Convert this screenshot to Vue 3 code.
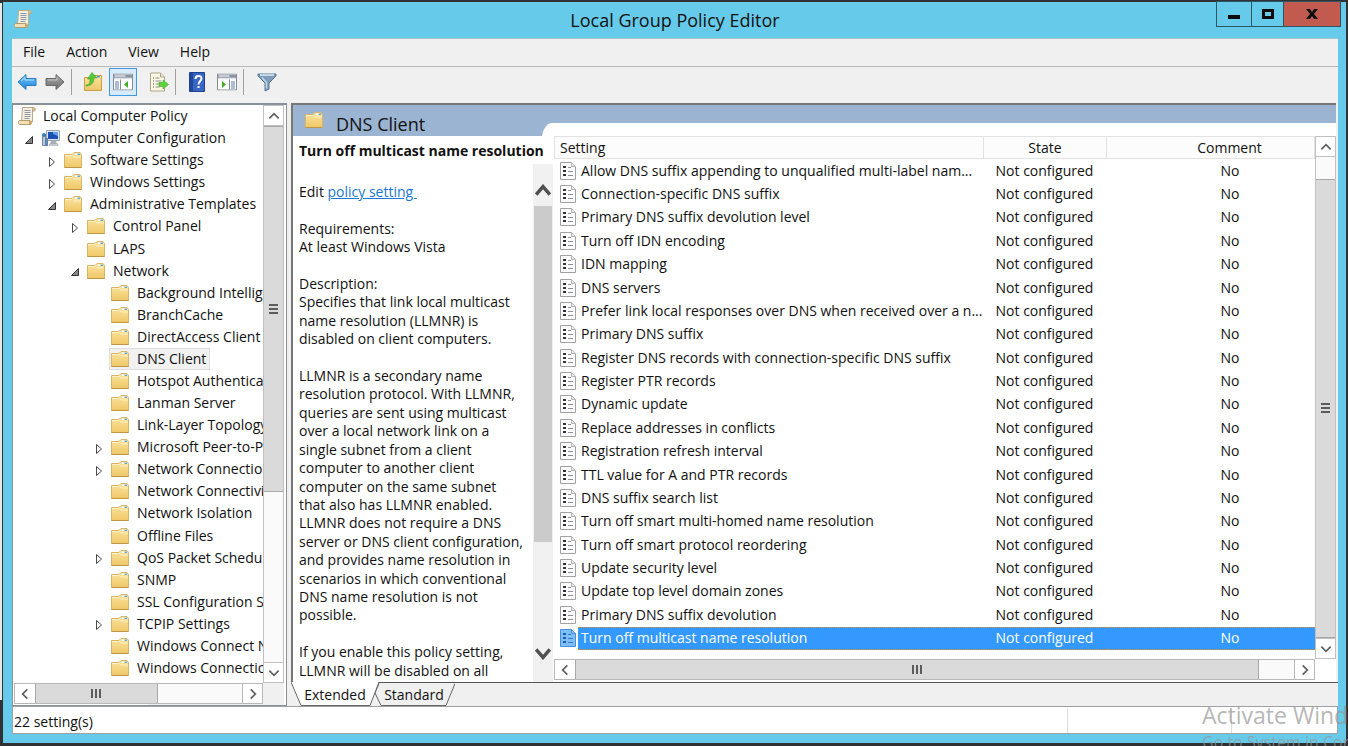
<script setup>
const menus = ['File', 'Action', 'View', 'Help']

const tree = [
  { text: 'Local Computer Policy', level: 0, icon: 'scroll' },
  { text: 'Computer Configuration', level: 1, icon: 'computer', state: 'open' },
  { text: 'Software Settings', level: 2, state: 'closed' },
  { text: 'Windows Settings', level: 2, state: 'closed' },
  { text: 'Administrative Templates', level: 2, state: 'open' },
  { text: 'Control Panel', level: 3, state: 'closed' },
  { text: 'LAPS', level: 3 },
  { text: 'Network', level: 3, state: 'open' },
  { text: 'Background Intelligent Transfer', level: 4 },
  { text: 'BranchCache', level: 4 },
  { text: 'DirectAccess Client', level: 4 },
  { text: 'DNS Client', level: 4, selected: true },
  { text: 'Hotspot Authentication', level: 4 },
  { text: 'Lanman Server', level: 4 },
  { text: 'Link-Layer Topology', level: 4 },
  { text: 'Microsoft Peer-to-Peer', level: 4, state: 'closed' },
  { text: 'Network Connections', level: 4, state: 'closed' },
  { text: 'Network Connectivity', level: 4 },
  { text: 'Network Isolation', level: 4 },
  { text: 'Offline Files', level: 4 },
  { text: 'QoS Packet Scheduler', level: 4, state: 'closed' },
  { text: 'SNMP', level: 4 },
  { text: 'SSL Configuration Settings', level: 4 },
  { text: 'TCPIP Settings', level: 4, state: 'closed' },
  { text: 'Windows Connect Now', level: 4 },
  { text: 'Windows Connection Manager', level: 4 },
]

const description = [
  '',
  'Requirements:',
  'At least Windows Vista',
  '',
  'Description:',
  'Specifies that link local multicast',
  'name resolution (LLMNR) is',
  'disabled on client computers.',
  '',
  'LLMNR is a secondary name',
  'resolution protocol. With LLMNR,',
  'queries are sent using multicast',
  'over a local network link on a',
  'single subnet from a client',
  'computer to another client',
  'computer on the same subnet',
  'that also has LLMNR enabled.',
  'LLMNR does not require a DNS',
  'server or DNS client configuration,',
  'and provides name resolution in',
  'scenarios in which conventional',
  'DNS name resolution is not',
  'possible.',
  '',
  'If you enable this policy setting,',
  'LLMNR will be disabled on all',
]

const settings = [
  'Allow DNS suffix appending to unqualified multi-label nam...',
  'Connection-specific DNS suffix',
  'Primary DNS suffix devolution level',
  'Turn off IDN encoding',
  'IDN mapping',
  'DNS servers',
  'Prefer link local responses over DNS when received over a n...',
  'Primary DNS suffix',
  'Register DNS records with connection-specific DNS suffix',
  'Register PTR records',
  'Dynamic update',
  'Replace addresses in conflicts',
  'Registration refresh interval',
  'TTL value for A and PTR records',
  'DNS suffix search list',
  'Turn off smart multi-homed name resolution',
  'Turn off smart protocol reordering',
  'Update security level',
  'Update top level domain zones',
  'Primary DNS suffix devolution',
  'Turn off multicast name resolution',
]
</script>

<template>
  <div class="desktop">
    <svg class="defs" width="0" height="0" aria-hidden="true">
      <defs>
        <linearGradient id="gFolder" x1="0" y1="0" x2="0" y2="1">
          <stop offset="0" stop-color="#fbe4a0" />
          <stop offset="1" stop-color="#efc767" />
        </linearGradient>
        <linearGradient id="gBlue" x1="0" y1="0" x2="0" y2="1">
          <stop offset="0" stop-color="#7cc8fa" />
          <stop offset="1" stop-color="#1683dc" />
        </linearGradient>
        <linearGradient id="gGrey" x1="0" y1="0" x2="0" y2="1">
          <stop offset="0" stop-color="#aaaaaa" />
          <stop offset="1" stop-color="#6c6c6c" />
        </linearGradient>
        <symbol id="folder" viewBox="0 0 18 16">
          <path d="M.5 2.500h7.500l2-2h6l1.500 2v13H.5z" fill="url(#gFolder)" stroke="#d8b566" />
          <path d="M1 3.500h7.500l1.500 1.500h7" fill="none" stroke="#fff1c4" />
          <path d="M11 1.500h5v1.500h-5z" fill="#fff" />
          <path d="M13.500 1.500h2.500v1.500h-2.500z" fill="#5aa9dc" />
          <path d="M.5 15.500h17" stroke="#bd9747" />
        </symbol>
        <symbol id="scroll" viewBox="0 0 18 18">
          <path d="M4.500.5h11c2 0 2.500 3 .5 3.500h-1.500V15H3.500z" fill="#f5efdf" stroke="#b8ab8c" />
          <path d="M14.500 4V1.500c2-1.500 3.500 2 1.500 2.500z" fill="#dcc793" stroke="#b09a6c" stroke-width=".7" />
          <path d="M1.500 13.500h10.500c-1 1.500-.5 3.500 1 4H2c-2 0-2.500-3.500-.5-4z" fill="#f3dfb4" stroke="#b39c6c" />
          <path d="M12 13.500c2.500 0 2.500 3.500 1 4s-2-2.500-1-4z" fill="#cba864" />
          <path d="M6.500 3.500h6M6.500 5.500h6M6.500 7.500h6M6.500 9.500h6M6.500 11.500h5" stroke="#8f96a5" />
        </symbol>
        <symbol id="computer" viewBox="0 0 20 18">
          <path d="M5.500 1.500h13v10h-13z" fill="#dfe5ee" stroke="#9aa3b2" />
          <path d="M7 3h10v7H7z" fill="#1b50b4" />
          <path d="M12 3h5v4l-5-2z" fill="#61a0ee" />
          <path d="M10 12h5l1 3H9z" fill="#a8afba" />
          <path d="M8 15h9v1.500H8z" fill="#d2d6dc" stroke="#969ca6" stroke-width=".5" />
          <path d="M1.500 5.500h3v11h-3z" fill="#b8c5d6" stroke="#7288a3" />
          <circle cx="3" cy="6" r="2" fill="#3e80bb" />
          <path d="M4 9h3v8H4z" fill="#5f87ad" />
        </symbol>
        <symbol id="doc" viewBox="0 0 16 18">
          <path class="paper" d="M.5.5h11l4 4v13H.5z" />
          <path class="fold" d="M11.500.5v4h4" />
          <path class="dots" d="M3 4h3v2H3zM3 8h3v2H3zM3 12h3v2H3z" />
          <path class="rules" d="M8 5.500h3M8 9.500h5M8 13.500h5" />
        </symbol>
        <symbol id="console" viewBox="0 0 20 17">
          <path d="M.5.5h19v16H.5z" fill="#fff" stroke="#838a96" />
          <path d="M1 1h18v4H1z" fill="#a4abb7" />
          <path d="M2 2.500h10M1 5.500h18" stroke="#eceff3" />
          <path d="M13.500 2.500h1M15.500 2.500h1M17.500 2.500h1" stroke="#465161" />
        </symbol>
        <symbol id="chev" viewBox="0 0 12 12">
          <path d="M2 8l4-4 4 4" fill="none" stroke="#606060" stroke-width="1.500" />
        </symbol>
      </defs>
    </svg>

    <main class="window">
      <header class="titlebar">
        <svg class="app-icon"><use href="#scroll" /></svg>
        <h1>Local Group Policy Editor</h1>
        <div class="controls">
          <button class="ctl min" aria-label="Minimize"><svg viewBox="0 0 14 12"><path d="M1 7h12v4H1z" /></svg></button>
          <button class="ctl max" aria-label="Maximize"><svg viewBox="0 0 14 12"><path d="M1 1h12v10H1zM4 4v4h6V4z" fill-rule="evenodd" /></svg></button>
          <button class="ctl close" aria-label="Close"><svg viewBox="0 0 14 12"><path d="M1 1h4l2 3 2-3h4L9 6l4 5H9L7 8l-2 3H1l4-5z" /></svg></button>
        </div>
      </header>

      <div class="client">
        <nav class="menu">
          <button v-for="m in menus" :key="m">{{ m }}</button>
        </nav>

        <div class="toolbar">
          <button aria-label="Back" class="tb">
            <svg viewBox="0 0 20 18"><path d="M1 9l8-7.500v4h10v7H9v4z" fill="url(#gBlue)" stroke="#2a7dbd" /><path d="M4 8l4-3.500V7h9" fill="none" stroke="#a4dcfc" /></svg>
          </button>
          <button aria-label="Forward" class="tb">
            <svg viewBox="0 0 20 18"><path d="M19 9l-8-7.500v4H1v7h10v4z" fill="url(#gGrey)" stroke="#686868" /><path d="M3 7h9V4.500" fill="none" stroke="#c8c8c8" /></svg>
          </button>
          <i class="sep"></i>
          <button aria-label="Up one level" class="tb up">
            <svg viewBox="0 0 20 20"><path d="M1.500 5.500h7l2-2h8v15h-17z" fill="url(#gFolder)" stroke="#c99f42" /><path d="M14 4h3v1.500h-3z" fill="#4aa3dc" /><path d="M3 13c4 0 4-3 4-6H4.500L9 .5 14 6h-3c0 4-2 8-8 8z" fill="#55c83a" stroke="#3ea529" stroke-width=".6" /></svg>
          </button>
          <button aria-label="Show or hide console tree" class="tb active">
            <svg viewBox="0 0 20 17"><use href="#console" width="20" height="17" /><path d="M7.500 6v10" stroke="#838a96" /><path d="M2 8.500h4M2 10.500h4M2 12.500h4M2 14.500h4" stroke="#5b7aa5" /><path d="M15 7.500v7L11 11z" fill="#3fae25" /></svg>
          </button>
          <button aria-label="Export list" class="tb">
            <svg viewBox="0 0 20 19"><path d="M1.500.5h10l4 4v14h-14z" fill="#fdf8df" stroke="#a9a58e" /><path d="M11.500.5v4h4" fill="#e7e2c8" stroke="#a9a58e" /><path d="M4 5h1v1H4zM4 8h1v1H4zM4 11h1v1H4zM4 14h1v1H4z" fill="#555" /><path d="M6.500 5.500h4M6.500 8.500h6M6.500 11.500h4M6.500 14.500h4" stroke="#8e8e9c" /><path d="M10 10h4V7.500l5.500 4.500-5.500 4.500V14h-4z" fill="#5bd13b" stroke="#44ad29" stroke-width=".6" /></svg>
          </button>
          <i class="sep"></i>
          <button aria-label="Help" class="tb help">
            <svg viewBox="0 0 16 20"><path d="M.5.5h15v19H.5z" fill="#3766c5" stroke="#203f8e" /><path d="M1 1h3v18H1z" fill="#234899" /><path d="M6.500 7c0-4 6-4 6-.5 0 2.500-3 2.500-3 6" fill="none" stroke="#fff" stroke-width="2" /><path d="M8.500 14h2v2h-2z" fill="#fff" /></svg>
          </button>
          <button aria-label="Show or hide action pane" class="tb">
            <svg viewBox="0 0 20 17"><use href="#console" width="20" height="17" /><path d="M12.500 6v10" stroke="#838a96" /><path d="M14 8.500h4M14 10.500h4M14 12.500h4M14 14.500h4" stroke="#5b7aa5" /><path d="M5 7.500v7L9 11z" fill="#3fae25" /></svg>
          </button>
          <i class="sep"></i>
          <button aria-label="Filter" class="tb filter">
            <svg viewBox="0 0 20 19"><path d="M1 1.500h18v2l-7 7v6l-4 2v-8l-7-7z" fill="#7f9db9" stroke="#577793" /><path d="M3 2.500h14" stroke="#e1ecf5" stroke-width="1.500" /><path d="M5 5l4.500 5v6" fill="none" stroke="#c4d6e4" stroke-width="1.500" /></svg>
          </button>
        </div>

        <div class="panes">
          <section class="tree-pane" aria-label="Console tree">
            <div class="tree-top">
              <ul class="tree">
                <li v-for="n in tree" :key="n.text" :class="'l' + n.level">
                  <span v-if="n.level" class="twist">
                    <svg v-if="n.state === 'closed'" viewBox="0 0 8 12"><path d="M1.500 1.500v9L6.500 6z" fill="#fff" stroke="#4a4a4a" /></svg>
                    <svg v-if="n.state === 'open'" viewBox="0 0 8 12"><path d="M7.500 2.500v7h-7z" fill="#888" stroke="#333" /></svg>
                  </span>
                  <span class="node" :class="{ selected: n.selected }">
                    <svg :class="n.icon || 'folder'"><use :href="'#' + (n.icon || 'folder')" /></svg>{{ n.text }}
                  </span>
                </li>
              </ul>
              <div class="vbar tree-v">
                <button aria-label="Scroll up"><svg><use href="#chev" /></svg></button>
                <div class="thumb"><i></i></div>
                <div class="rest"></div>
                <button aria-label="Scroll down"><svg class="down"><use href="#chev" /></svg></button>
              </div>
            </div>
            <div class="hrow">
              <div class="hbar tree-h">
                <button aria-label="Scroll left"><svg class="left"><use href="#chev" /></svg></button>
                <div class="thumb"><i></i></div>
                <div class="rest"></div>
                <button aria-label="Scroll right"><svg class="right"><use href="#chev" /></svg></button>
              </div>
            </div>
          </section>

          <section class="result-pane">
            <div class="result">
              <div class="details">
                <h2><svg class="folder"><use href="#folder" /></svg>DNS Client</h2>
                <h3>Turn off multicast name resolution</h3>
                <div class="desc-row">
                  <div class="desc">
                    <p>Edit <a href="#">policy setting&nbsp;</a></p>
                    <p v-for="(line, i) in description" :key="i">{{ line }}</p>
                  </div>
                  <div class="flatbar">
                    <button aria-label="Scroll description up"><svg viewBox="0 0 14 10"><path d="M1 9l6-7 6 7" /></svg></button>
                    <div class="thumb"></div>
                    <div class="rest"></div>
                    <button aria-label="Scroll description down"><svg viewBox="0 0 14 10"><path d="M1 1l6 7 6-7" /></svg></button>
                  </div>
                </div>
              </div>

              <div class="list">
                <div class="band"><svg viewBox="0 0 12 13"><path d="M0 13C1 7 4 1 9 0H12V13z" fill="#fff" /></svg></div>
                <div class="list-top">
                  <table>
                    <thead>
                      <tr><th>Setting</th><th>State</th><th>Comment</th></tr>
                    </thead>
                    <tbody>
                      <tr v-for="(s, i) in settings" :key="s" :class="{ sel: i === settings.length - 1 }">
                        <td><svg class="doc"><use href="#doc" /></svg><span>{{ s }}</span></td>
                        <td>Not configured</td>
                        <td>No</td>
                      </tr>
                    </tbody>
                  </table>
                  <div class="vbar list-v">
                    <button aria-label="Scroll list up"><svg><use href="#chev" /></svg></button>
                    <div class="before"></div>
                    <div class="thumb"><i></i></div>
                    <button aria-label="Scroll list down"><svg class="down"><use href="#chev" /></svg></button>
                  </div>
                </div>
                <div class="hrow">
                  <div class="hbar list-h">
                    <button aria-label="Scroll list left"><svg class="left"><use href="#chev" /></svg></button>
                    <div class="thumb"><i></i></div>
                    <div class="rest"></div>
                    <button aria-label="Scroll list right"><svg class="right"><use href="#chev" /></svg></button>
                  </div>
                </div>
              </div>
            </div>
            <div class="tabs">
              <button class="tab ext">
                <svg viewBox="0 0 88 24" preserveAspectRatio="none"><path d="M0 0l10 23.500h69L88 0" fill="#fff" stroke="#666" /></svg><span>Extended</span>
              </button>
              <button class="tab std">
                <svg viewBox="0 0 80 23" preserveAspectRatio="none"><path d="M4 .5L0 10l6 12.500h65L80 .5" fill="#f0f0f0" stroke="#666" /></svg><span>Standard</span>
              </button>
            </div>
          </section>
        </div>

        <footer class="status"><span>22 setting(s)</span><i></i><i></i></footer>
      </div>
    </main>
    <div class="watermark"><b>Activate Windows</b><span>Go to System in Control Panel</span></div>
  </div>
</template>

<style>
body { margin: 0; overflow: hidden; }
</style>

<style scoped>
* { box-sizing: border-box; }
.desktop {
  position: relative;
  height: 100vh;
  padding: 2px 2px 3px 3px;
  background: linear-gradient(#e8e8e8, #e8e8e8) left 3px / 2px 697px no-repeat, #2f3133;
  overflow: hidden;
  font: 14px/18px "Open Sans", "Noto Sans", sans-serif;
  color: #111;
}
.defs { position: absolute; }
svg { display: block; flex: none; }
button { font: inherit; color: inherit; border: 0; padding: 0; background: none; display: flex; align-items: center; justify-content: center; flex: none; }
h1, h2, h3, p, ul { margin: 0; padding: 0; font-weight: 400; }
.window { height: 100%; display: flex; flex-direction: column; background: #66cbea; padding: 0 8px 9px 9px; }
.titlebar { height: 36px; flex: none; display: flex; justify-content: center; position: relative; }
.titlebar h1 { font-size: 18px; line-height: 36px; }
.app-icon { position: absolute; left: 2px; top: 8px; width: 18px; height: 18px; }
.controls { position: absolute; right: -3px; top: -1px; display: flex; border: 1px solid #2c5664; }
.ctl { height: 24px; border-left: 1px solid #2c5664; }
.ctl svg { width: 14px; height: 12px; fill: #0c0c0c; }
.min { width: 34px; border-left: 0; }
.max { width: 32px; }
.close { width: 57px; background: #c25a50; }
.client { flex: 1; min-height: 0; display: flex; flex-direction: column; background: #f0f0f0; border-top: 1px solid #a5c2cc; }
.menu { height: 28px; flex: none; display: flex; gap: 21px; padding: 0 0 2px 11px; border-bottom: 1px solid #b8b8bc; }
.toolbar { height: 36px; flex: none; display: flex; align-items: center; padding: 0 0 6px 1px; }
.tb { width: 28px; height: 28px; }
.tb svg { width: 20px; height: 20px; }
.active { border: 1px solid #3c9ae8; background: #d7ebfb; margin-right: 8px; }
.up { margin-left: 4px; margin-right: 2px; }
.help { margin-left: 4px; margin-right: 2px; }
.help svg { width: 16px; }
.filter { margin-left: 6px; }
.sep { width: 1px; height: 26px; background: #a0a0a0; margin: 0 3px 0 2px; }
.panes { flex: 1; min-height: 0; display: flex; gap: 4px; }
.tree-pane { width: 275px; flex: none; border: 1px solid #8b8f96; border-top-width: 2px; background: #fff; display: flex; flex-direction: column; padding: 0 2px 0 0; }
.tree-top { flex: 1; min-height: 0; display: flex; }
.tree { flex: 1; min-width: 0; list-style: none; display: flex; flex-direction: column; overflow: hidden; padding-bottom: 4px; }
.tree li { flex: 1 1 0; min-height: 0; display: flex; align-items: center; white-space: nowrap; }
.l0 { padding-left: 3px; }
.l1 { padding-left: 12px; }
.l2 { padding-left: 35px; }
.l3 { padding-left: 58px; }
.l4 { padding-left: 82px; }
.twist { width: 14px; flex: none; }
.twist svg { width: 8px; height: 12px; margin-top: 3px; }
.node { display: flex; align-items: center; gap: 8px; height: 22px; padding: 0 3px 0 1px; border: 1px solid transparent; }
.selected { background: #f1f1f1; border-color: #dcdcdc; }
.folder { width: 18px; height: 16px; }
.scroll { width: 18px; height: 18px; }
.computer { width: 20px; height: 18px; }
.l1 .node { gap: 6px; }
.l0 .node { gap: 7px; }
.vbar { width: 21px; flex: none; display: flex; flex-direction: column; border: 1px solid #c0c0c0; border-width: 0 1px; background: #fafafa; }
.vbar button { height: 21px; border: 1px solid #c0c0c0; border-width: 1px 0; background: #fff; }
.vbar svg, .hbar svg { width: 14px; height: 14px; }
.down { transform: rotate(180deg); }
.left { transform: rotate(-90deg); }
.right { transform: rotate(90deg); }
.thumb { display: flex; align-items: center; justify-content: center; background: #dadada; border: 1px solid #a8a8a8; }
.vbar .thumb { border-width: 1px 0; }
.vbar i { width: 9px; height: 10px; background: repeating-linear-gradient(#5c5c5c 0 2px, transparent 2px 4px); }
.hbar i { width: 10px; height: 9px; background: repeating-linear-gradient(90deg, #5c5c5c 0 2px, transparent 2px 4px); }
.tree-v .thumb { flex: 365; }
.tree-v .rest { flex: 171; }
.hrow { height: 22px; flex: none; display: flex; padding: 0 21px 1px 1px; background: linear-gradient(90deg, #fff 50%, #f0f0f0 50%); }
.hbar { flex: 1; display: flex; border: 1px solid #b8b8b8; background: #fafafa; }
.hbar button { width: 20px; background: #fff; }
.hbar .thumb { border-width: 0 1px; }
.hbar button:last-child { border-left: 1px solid #b8b8b8; }
.tree-h .thumb { flex: 123; }
.tree-h .rest { flex: 86; }
.result-pane { flex: 1; min-width: 0; display: flex; flex-direction: column; }
.result { flex: 1; min-height: 0; display: flex; margin-right: 2px; border: 1px solid #777; border-width: 2px 0 0 2px; background: #fff; }
.details { width: 249px; flex: none; display: flex; flex-direction: column; }
.details h2 { height: 31px; flex: none; display: flex; align-items: center; gap: 13px; padding: 7px 0 0 12px; font-size: 18px; background: #9ab4d1; }
.details h2 .folder { margin-bottom: 8px; }
.details h3 { height: 28px; flex: none; padding: 6px 0 0 6px; font-weight: 700; font-size: 14px; white-space: nowrap; }
.desc-row { flex: 1; min-height: 0; display: flex; margin-right: -11px; }
.desc { flex: 1; min-width: 0; display: flex; flex-direction: column; padding: 19px 0 2px 6px; }
.desc p { flex: 1 1 0; min-height: 0; white-space: nowrap; }
.desc a { color: #1a78d2; }
.flatbar { width: 20px; display: flex; flex-direction: column; background: #f1f1f1; padding-bottom: 18px; }
.flatbar button { height: 42px; padding-top: 10px; }
.flatbar button:last-child { height: 20px; padding: 0; }
.flatbar svg { width: 16px; height: 12px; fill: none; stroke: #505050; stroke-width: 3; }
.flatbar .thumb { flex: 335; border: 0; background: #cbcbcb; margin: 0 1px; }
.flatbar .rest { flex: 102; }
.list { flex: 1; min-width: 0; display: flex; flex-direction: column; padding-bottom: 1px; }
.band { height: 31px; flex: none; background: linear-gradient(#9ab4d1 0 18px, transparent 18px) right / calc(100% - 12px) 100% no-repeat, linear-gradient(#9ab4d1, #9ab4d1) left / 12px 100% no-repeat; padding-top: 18px; }
.band svg { width: 12px; height: 13px; }
.list-top { flex: 1; min-height: 0; display: flex; padding-left: 12px; }
table { flex: 1; min-width: 0; display: flex; flex-direction: column; padding-bottom: 9px; }
thead { display: block; flex: none; }
tbody { flex: 1; min-height: 0; display: flex; flex-direction: column; }
tr { display: grid; grid-template-columns: 430px 123px minmax(0, 1fr); }
tbody tr { flex: 1 1 0; min-height: 0; }
th { height: 23px; line-height: 21px; font-weight: 400; border: 1px solid #e2e2e2; border-left: 0; background: #fcfcfc; padding: 0; }
th:first-child { text-align: left; padding-left: 5px; border-left: 1px solid #e2e2e2; }
th:last-child { padding-left: 38px; }
td { display: flex; align-items: center; justify-content: center; min-width: 0; padding: 0 2px 0 0; white-space: nowrap; }
td:first-child { justify-content: flex-start; padding: 0 0 0 6px; gap: 2px; }
td:last-child { padding: 0 0 0 38px; }
td span { flex: 1; align-self: stretch; display: flex; align-items: center; padding-left: 3px; }
.doc { width: 16px; height: 18px; }
.paper { fill: var(--paper, #fcfcfc); stroke: var(--edge, #a2a2a2); }
.fold { fill: var(--paper, #e6e6e6); stroke: var(--edge, #b4b4b4); }
.dots { fill: var(--dots, #333333); }
.rules { stroke: var(--rules, #8f8fa4); }
.sel .doc { --paper: #7dbdf8; --edge: #4a90d6; --dots: #1b5cae; --rules: #3a78c4; }
.sel td:not(:first-child), .sel span { background: #3399ff; color: #fff; border: 1px dotted #e08a30; border-width: 1px 0; }
.list-v .before { flex: 22; }
.list-v .thumb { flex: 461; }
.list .hrow { padding-left: 12px; background: none; height: 22px; }
.list-h .thumb { flex: 684; }
.list-h .rest { flex: 35; }
.tabs { height: 24px; flex: none; display: flex; border-top: 1px solid #555; }
.tab { position: relative; height: 23px; }
.tab svg { position: absolute; inset: 0; width: 100%; height: 100%; }
.tab span { position: relative; }
.ext { width: 88px; height: 24px; z-index: 1; margin-top: -1px; padding-top: 1px; }
.std { width: 80px; margin-left: -4px; padding-right: 2px; }
.status { height: 28px; flex: none; display: flex; background: #fff; border: 1px solid #a0a0a0; padding: 1px 0 0 1px; line-height: 28px; }
.status span { flex: 1; }
.status i { width: 164px; border-left: 1px solid #ddd; }
.status i:last-child { width: 106px; }
.watermark { position: absolute; right: -48px; bottom: -8px; width: 194px; color: rgba(150, 150, 150, .7); white-space: nowrap; overflow: hidden; display: flex; flex-direction: column; }
.watermark b { font-weight: 400; font-size: 23px; line-height: 30px; }
.watermark span { font-size: 16px; line-height: 24px; }
</style>
